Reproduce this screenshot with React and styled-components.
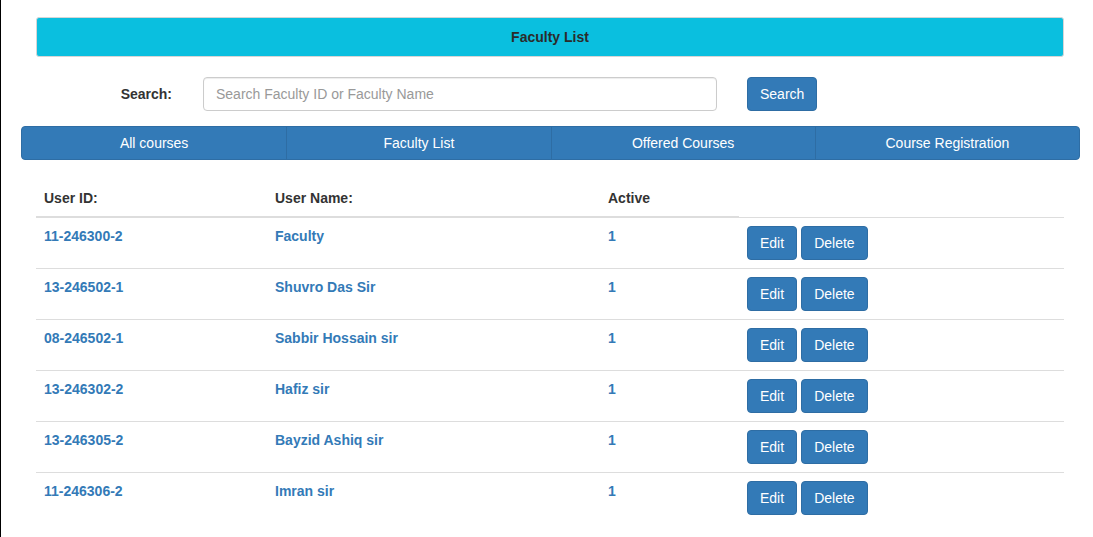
import React from "react";
import styled, { createGlobalStyle } from "styled-components";

const Global = createGlobalStyle`
  html, body { margin: 0; padding: 0; background: #fff; }
  body {
    font-family: "Liberation Sans", Arial, Helvetica, sans-serif;
    font-size: 14px;
    line-height: 20px;
    color: #333;
  }
  * { box-sizing: border-box; }
`;

const Page = styled.div`
  min-height: 537px;
  border-left: 1px solid #000;
  padding-top: 17px;
  display: flex;
  flex-direction: column;
`;

const TitleBar = styled.div`
  margin-left: 35px;
  width: 1028px;
  height: 40px;
  background: #0abfdf;
  border: 1px solid #d6d6d6;
  border-radius: 3px;
  display: flex;
  align-items: center;
  justify-content: center;
  font-weight: bold;
  font-size: 14px;
  color: #2b2b2b;
`;

const SearchRow = styled.form`
  margin: 20px 0 0 35px;
  width: 1028px;
  display: flex;
  align-items: center;
`;

const SearchLabel = styled.label`
  width: 136px;
  text-align: right;
  font-weight: bold;
  color: #333;
  margin-right: 31px;
`;

const SearchInput = styled.input`
  width: 514px;
  height: 34px;
  padding: 6px 12px;
  border: 1px solid #ccc;
  border-radius: 4px;
  font-family: inherit;
  font-size: 14px;
  color: #555;
  box-shadow: inset 0 1px 1px rgba(0,0,0,.075);
  margin-right: 30px;
  &::placeholder { color: #999; }
`;

const Button = styled.button`
  height: 34px;
  padding: 6px 12px;
  background: #337ab7;
  border: 1px solid #2e6da4;
  border-radius: 4px;
  color: #fff;
  font-family: inherit;
  font-size: 14px;
  line-height: 20px;
  cursor: pointer;
`;

const Nav = styled.nav`
  margin: 15px 0 0 20px;
  width: 1059px;
  height: 34px;
  display: grid;
  grid-template-columns: repeat(4, 1fr);
  background: #337ab7;
  border: 1px solid #2e6da4;
  border-radius: 4px;
  overflow: hidden;
`;

const NavItem = styled.a`
  display: flex;
  align-items: center;
  justify-content: center;
  color: #fff;
  text-decoration: none;
  font-size: 14px;
  border-left: ${(p) => (p.$first ? "none" : "1px solid #2e6da4")};
`;

const Table = styled.table`
  margin: 20px 0 0 35px;
  width: 1028px;
  border-collapse: collapse;
  border-spacing: 0;
  table-layout: fixed;
`;

const Th = styled.th`
  text-align: left;
  padding: 8px;
  font-weight: bold;
  color: #333;
  border-bottom: 2px solid #ddd;
  vertical-align: bottom;
  line-height: 20px;
`;

const Td = styled.td`
  padding: 8px;
  vertical-align: top;
  border-top: 1px solid #ddd;
  line-height: 20px;
`;

const CellLink = styled.a`
  color: #337ab7;
  font-weight: bold;
  text-decoration: none;
`;

const Actions = styled.div`
  display: flex;
  gap: 4px;
`;

const rows = [
  ["11-246300-2", "Faculty", "1"],
  ["13-246502-1", "Shuvro Das Sir", "1"],
  ["08-246502-1", "Sabbir Hossain sir", "1"],
  ["13-246302-2", "Hafiz sir", "1"],
  ["13-246305-2", "Bayzid Ashiq sir", "1"],
  ["11-246306-2", "Imran sir", "1"],
];

export default function App() {
  return (
    <>
      <Global />
      <Page>
        <TitleBar>Faculty List</TitleBar>
        <SearchRow onSubmit={(e) => e.preventDefault()}>
          <SearchLabel>Search:</SearchLabel>
          <SearchInput placeholder="Search Faculty ID or Faculty Name" />
          <Button type="submit">Search</Button>
        </SearchRow>
        <Nav>
          <NavItem $first href="#">All courses</NavItem>
          <NavItem href="#">Faculty List</NavItem>
          <NavItem href="#">Offered Courses</NavItem>
          <NavItem href="#">Course Registration</NavItem>
        </Nav>
        <Table>
          <colgroup>
            <col style={{ width: 231 }} />
            <col style={{ width: 333 }} />
            <col style={{ width: 139 }} />
            <col style={{ width: 325 }} />
          </colgroup>
          <thead>
            <tr>
              <Th>User ID:</Th>
              <Th>User Name:</Th>
              <Th>Active</Th>
            </tr>
          </thead>
          <tbody>
            {rows.map(([id, name, active]) => (
              <tr key={id + name}>
                <Td><CellLink href="#">{id}</CellLink></Td>
                <Td><CellLink href="#">{name}</CellLink></Td>
                <Td><CellLink href="#">{active}</CellLink></Td>
                <Td>
                  <Actions>
                    <Button>Edit</Button>
                    <Button>Delete</Button>
                  </Actions>
                </Td>
              </tr>
            ))}
          </tbody>
        </Table>
      </Page>
    </>
  );
}
